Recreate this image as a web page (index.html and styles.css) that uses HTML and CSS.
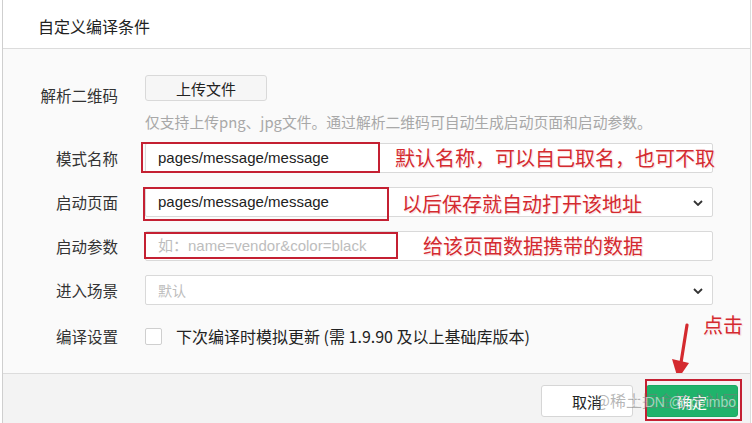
FILE: index.html
```html
<!DOCTYPE html>
<html lang="zh-CN">
<head>
    <meta charset="UTF-8">
    <title>自定义编译条件</title>
    <link rel="stylesheet" href="styles.css">
</head>
<body>
    <div class="dialog">
        <div class="dialog-head">自定义编译条件</div>

        <div class="dialog-body">
            <div class="row row-upload">
                <label class="label">解析二维码</label>
                <div class="field">
                    <button class="btn-upload">上传文件</button>
                    <div class="hint">仅支持上传png、jpg文件。通过解析二维码可自动生成启动页面和启动参数。</div>
                </div>
            </div>

            <div class="row">
                <label class="label">模式名称</label>
                <div class="field">
                    <div class="input">pages/message/message</div>
                    <span class="mark mark-1"></span>
                    <span class="note note-1">默认名称，可以自己取名，也可不取</span>
                </div>
            </div>

            <div class="row">
                <label class="label">启动页面</label>
                <div class="field">
                    <div class="input select">pages/message/message
                        <svg class="chevron" width="10" height="6" viewBox="0 0 10 6"><path d="M1 1 L5 5 L9 1" fill="none" stroke="#333" stroke-width="1.8"/></svg>
                    </div>
                    <span class="mark mark-2"></span>
                    <span class="note note-2">以后保存就自动打开该地址</span>
                </div>
            </div>

            <div class="row">
                <label class="label">启动参数</label>
                <div class="field">
                    <div class="input placeholder">如：name=vendor&amp;color=black</div>
                    <span class="mark mark-3"></span>
                    <span class="note note-3">给该页面数据携带的数据</span>
                </div>
            </div>

            <div class="row">
                <label class="label">进入场景</label>
                <div class="field">
                    <div class="input select placeholder cjk">默认
                        <svg class="chevron" width="10" height="6" viewBox="0 0 10 6"><path d="M1 1 L5 5 L9 1" fill="none" stroke="#333" stroke-width="1.8"/></svg>
                    </div>
                </div>
            </div>

            <div class="row row-check">
                <label class="label">编译设置</label>
                <div class="field check">
                    <span class="checkbox"></span>
                    <span class="check-text">下次编译时模拟更新 (需 1.9.90 及以上基础库版本)</span>
                    <span class="note note-click">点击</span>
                    <svg class="arrow" width="30" height="60" viewBox="0 0 30 60">
                        <path d="M20 2 L13 46" stroke="#d42a2f" stroke-width="3.2" fill="none" stroke-linecap="round"/>
                        <path d="M5 36 L11 56 L22 40 Z" fill="#d42a2f"/>
                    </svg>
                </div>
            </div>
        </div>

        <div class="dialog-foot">
            <button class="btn btn-cancel">取消</button>
            <button class="btn btn-ok">确定</button>
            <span class="mark mark-ok"></span>
            <span class="watermark">@稀土掘金技术社区</span>
            <span class="watermark wm-2">CSDN @kpeimbo</span>
        </div>
    </div>
</body>
</html>
```

FILE: styles.css
```css
body {
    margin: 0;
    background: #fff;
    font-family: "Noto Sans CJK SC", sans-serif;
    color: #333;
}
.dialog {
    margin-left: 2px;
    width: 747px;
    height: 423px;
    border-left: 1px solid #cfcfcf;
    border-right: 1px solid #dcdcdc;
    display: flex;
    flex-direction: column;
}
.dialog-head {
    height: 49px;
    padding: 3px 0 0 35px;
    box-sizing: border-box;
    display: flex;
    align-items: center;
    font-size: 16px;
    color: #222;
    background: #fff;
    border-bottom: 1px solid #dcdcdc;
}
.dialog-body {
    height: 324px;
    box-sizing: border-box;
    background: #fafafa;
    padding: 26px 37px 0 0;
}
.row {
    display: grid;
    grid-template-columns: 115px 1fr;
    column-gap: 27px;
    align-items: center;
    margin-top: 14px;
}
.row-upload {
    margin-top: 0;
    align-items: start;
}
.row-upload .label {
    padding-top: 5px;
}
.row-upload + .row {
    margin-top: 11px;
}
.row-check {
    margin-top: 16px;
}
.label {
    text-align: right;
    font-size: 15.5px;
    color: #333;
    line-height: 30px;
}
.field {
    position: relative;
}
.btn-upload {
    width: 122px;
    height: 26px;
    border: 1px solid #d9d9d9;
    border-radius: 3px;
    background: #f6f6f6;
    font-family: "Noto Sans CJK SC", sans-serif;
    font-size: 15px;
    color: #222;
    padding: 0;
}
.hint {
    margin-top: 11px;
    font-size: 14.8px;
    line-height: 20px;
    color: #a8a8a8;
    white-space: nowrap;
}
.input {
    height: 30px;
    box-sizing: border-box;
    border: 1px solid #d9d9d9;
    border-radius: 2px;
    background: #fff;
    padding-left: 12px;
    font-family: "Liberation Sans", "Noto Sans CJK SC", sans-serif;
    font-size: 15px;
    line-height: 28px;
    color: #222;
    position: relative;
}
.placeholder {
    color: #bdbdbd;
}
.cjk {
    font-family: "Noto Sans CJK SC", sans-serif;
    font-size: 14px;
}
.select .chevron {
    position: absolute;
    right: 9px;
    top: 12px;
}
.mark {
    position: absolute;
    border: 2px solid #c42032;
    box-sizing: border-box;
}
.mark-1 { left: -4px; top: -1px; width: 239px; height: 31px; }
.mark-2 { left: -2px; top: 0; width: 246px; height: 34px; }
.mark-3 { left: -1px; top: 1px; width: 254px; height: 27px; }
.note {
    position: absolute;
    font-size: 20px;
    line-height: 24px;
    color: #d42a2f;
    white-space: nowrap;
    text-shadow: 0 0 2px #fff, 1px 1px 1px #f6d4d6;
}
.note-1 { left: 250px; top: 3px; }
.note-2 { left: 257px; top: 5px; }
.note-3 { left: 278px; top: 3px; }
.check {
    display: flex;
    align-items: center;
    height: 30px;
}
.checkbox {
    width: 15px;
    height: 15px;
    border: 1px solid #cfcfcf;
    border-radius: 2px;
    background: #fff;
    margin-right: 14px;
}
.check-text {
    font-size: 16px;
    color: #222;
    white-space: nowrap;
}
.note-click {
    left: 558px;
    top: -8px;
}
.arrow {
    position: absolute;
    left: 522px;
    top: 2px;
}
.dialog-foot {
    flex: 1;
    position: relative;
    background: #f3f3f3;
    border-top: 1px solid #dcdcdc;
    display: flex;
    justify-content: flex-end;
    align-items: flex-start;
    gap: 13px;
    padding: 11px 12px 0 0;
}
.btn {
    width: 92px;
    height: 32px;
    border-radius: 3px;
    font-family: "Noto Sans CJK SC", sans-serif;
    font-size: 15px;
    padding: 0;
}
.btn-cancel {
    background: #fff;
    border: 1px solid #d6d6d6;
    color: #222;
}
.btn-ok {
    background: #1fb36b;
    border: 1px solid #1aa862;
    color: #fff;
}
.mark-ok {
    right: 8px;
    top: 5px;
    width: 97px;
    height: 42px;
}
.watermark {
    position: absolute;
    right: 12px;
    top: 14px;
    font-size: 16px;
    color: rgba(120, 120, 120, 0.55);
    white-space: nowrap;
}
.wm-2 {
    right: 14px;
    top: 20px;
    font-family: "Liberation Sans", sans-serif;
    font-size: 14px;
    color: rgba(255, 255, 255, 0.55);
}
```
